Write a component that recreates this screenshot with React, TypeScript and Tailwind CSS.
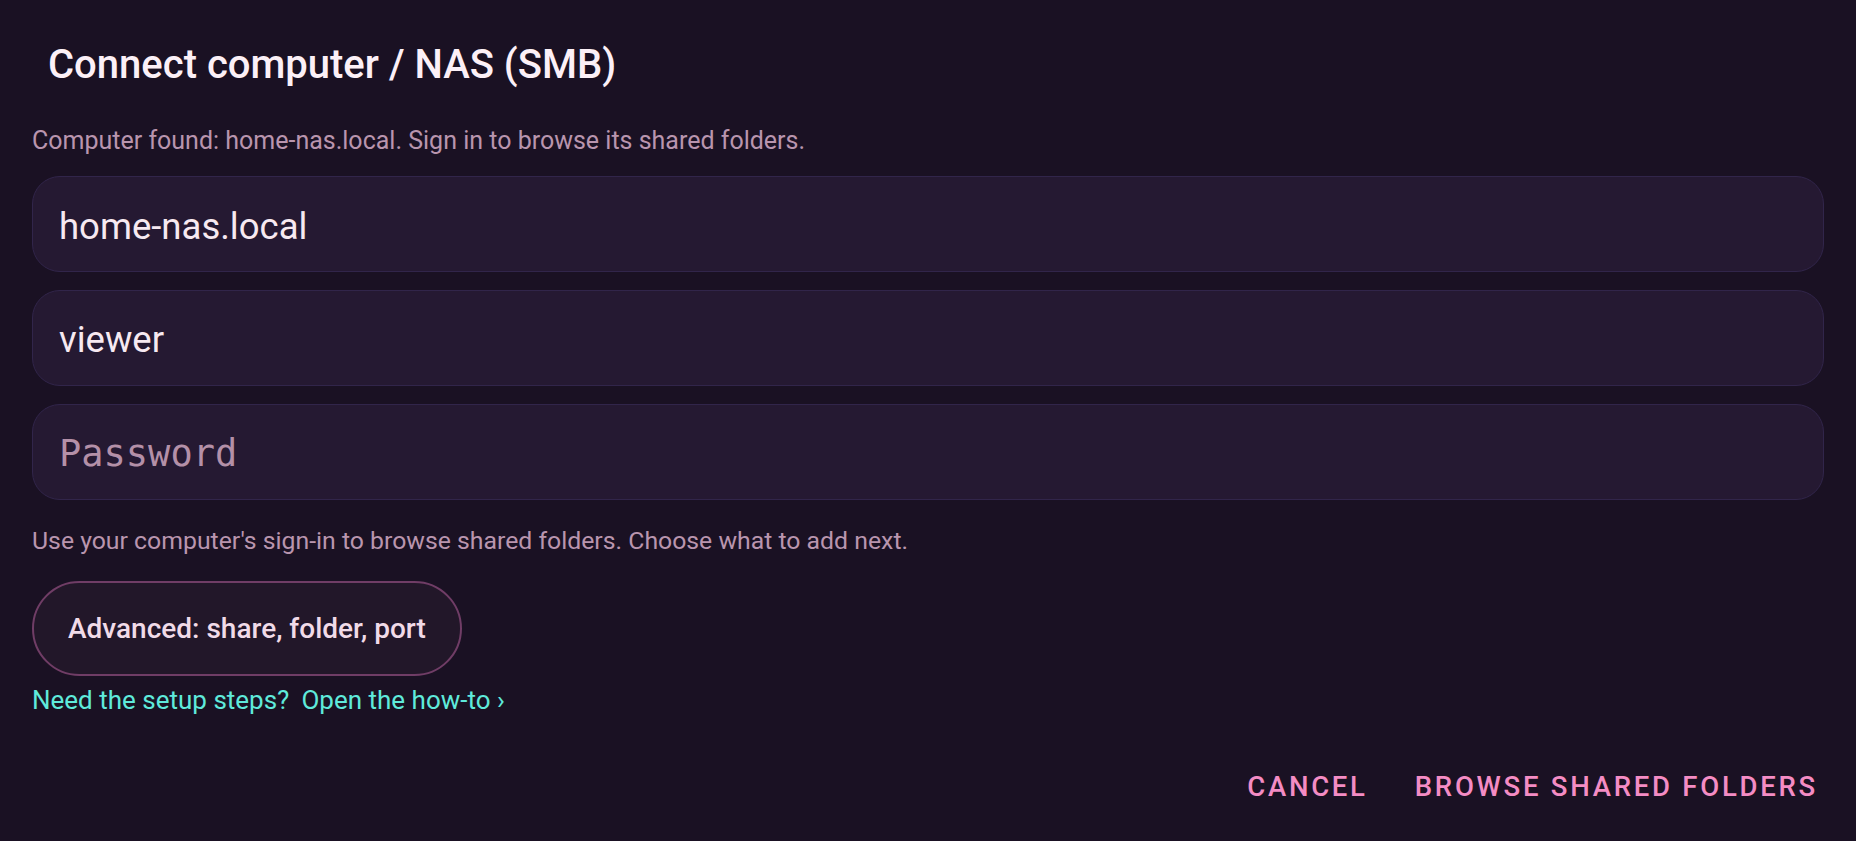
import React from "react";

export default function App() {
  return (
    <div
      className="w-[1856px] h-[841px] bg-[#1a1123] flex flex-col px-[32px] overflow-hidden"
      style={{ fontFamily: "Roboto, 'Noto Sans', sans-serif" }}
    >
      <h1 className="mt-[41px] pl-[16px] text-[40px] leading-[48px] font-medium text-[#fcf0f7]">
        Connect computer / NAS (SMB)
      </h1>
      <p className="mt-[36px] text-[25px] leading-[32px] text-[#b995ae]">
        Computer found: home-nas.local. Sign in to browse its shared folders.
      </p>
      <div className="mt-[19px] flex flex-col gap-[18px]">
        <div className="h-[96px] rounded-[28px] border border-[#31254a] bg-[#251932] flex items-center pl-[26px] pt-[5px]">
          <span className="text-[36.5px] leading-[44px] text-[#f7e9f1]">home-nas.local</span>
        </div>
        <div className="h-[96px] rounded-[28px] border border-[#31254a] bg-[#251932] flex items-center pl-[26px] pt-[4px]">
          <span className="text-[36.5px] leading-[44px] text-[#f7e9f1]">viewer</span>
        </div>
        <div className="h-[96px] rounded-[28px] border border-[#31254a] bg-[#251932] flex items-center pl-[26px] pt-[4px]">
          <span
            className="text-[37px] leading-[44px] text-[#b490a8]"
            style={{ fontFamily: "'DejaVu Sans Mono', monospace" }}
          >
            Password
          </span>
        </div>
      </div>
      <p className="mt-[25px] text-[24.8px] leading-[32px] text-[#b995ae]">
        Use your computer's sign-in to browse shared folders. Choose what to add next.
      </p>
      <div className="mt-[24px] flex">
        <button className="h-[95px] rounded-full border-2 border-[#703d66] bg-[#221729] px-[34px] text-[28px] font-medium text-[#f1dbe8]">
          Advanced: share, folder, port
        </button>
      </div>
      <div className="mt-[8px] flex gap-[12px] text-[26px] leading-[32px] text-[#5feadb]">
        <span>Need the setup steps?</span>
        <span>Open the how-to ›</span>
      </div>
      <div className="mt-[55px] flex justify-end gap-[47px] pr-[6px] text-[27.5px] leading-[32px] font-medium tracking-[0.1em] text-[#f48cc4]">
        <button>CANCEL</button>
        <button>BROWSE SHARED FOLDERS</button>
      </div>
    </div>
  );
}
